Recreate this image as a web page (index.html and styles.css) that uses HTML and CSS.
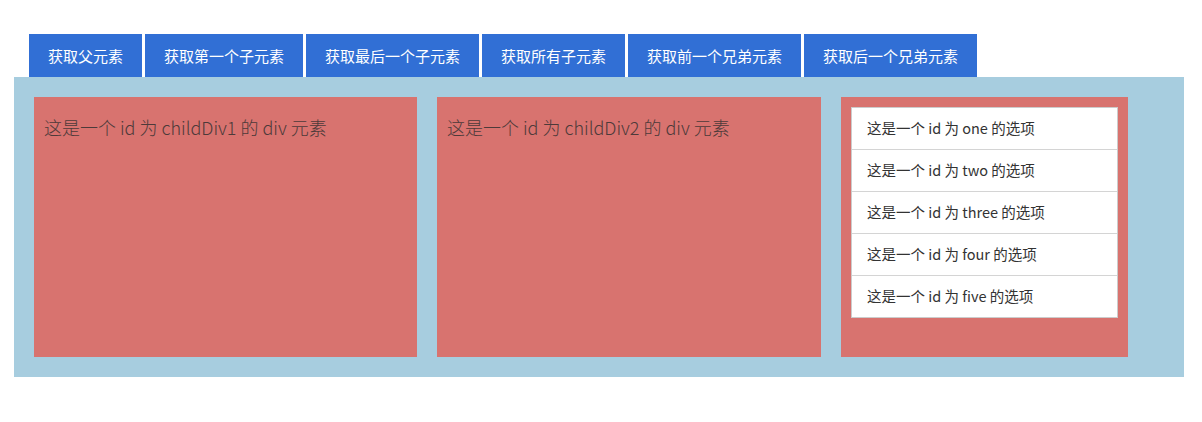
FILE: index.html
```html
<!DOCTYPE html>
<html lang="zh">
<head>
<meta charset="utf-8">
<link rel="stylesheet" href="styles.css">
</head>
<body>
<div class="page">
  <div class="toolbar">
    <button class="btn">获取父元素</button>
    <button class="btn">获取第一个子元素</button>
    <button class="btn">获取最后一个子元素</button>
    <button class="btn">获取所有子元素</button>
    <button class="btn">获取前一个兄弟元素</button>
    <button class="btn">获取后一个兄弟元素</button>
  </div>
  <div class="parent">
    <div class="child child-wide">这是一个 id 为 childDiv1 的 div 元素</div>
    <div class="child child-wide2">这是一个 id 为 childDiv2 的 div 元素</div>
    <div class="child child-list">
      <ul class="list">
        <li>这是一个 id 为 one 的选项</li>
        <li>这是一个 id 为 two 的选项</li>
        <li>这是一个 id 为 three 的选项</li>
        <li>这是一个 id 为 four 的选项</li>
        <li>这是一个 id 为 five 的选项</li>
      </ul>
    </div>
  </div>
</div>
</body>
</html>
```
FILE: styles.css
```css
* { box-sizing: border-box; }
body {
  margin: 0;
  background: #fff;
  font-family: "Noto Sans CJK SC", "Noto Sans", sans-serif;
}
.page {
  padding: 34px 0 0 14px;
}
.toolbar {
  display: flex;
  gap: 3px;
  padding-left: 15px;
}
.btn {
  height: 43px;
  padding: 0;
  border: none;
  background: #316fd5;
  color: #fff;
  font-family: "Noto Sans CJK SC", "Noto Sans", sans-serif;
  font-size: 15px;
  line-height: 43px;
  margin: 0;
}
.btn:nth-child(1) { width: 113px; }
.btn:nth-child(2) { width: 158px; }
.btn:nth-child(3) { width: 173px; }
.btn:nth-child(4) { width: 143px; }
.btn:nth-child(5) { width: 173px; }
.btn:nth-child(6) { width: 173px; }
.parent {
  width: 1170px;
  height: 300px;
  background: #a7cddf;
  padding: 20px;
  display: flex;
  gap: 20px;
}
.child {
  height: 260px;
  background: #d8736f;
  padding: 10px;
}
.child-wide, .child-wide2 {
  font-size: 18px;
  font-weight: 300;
  color: #4d3a3a;
  line-height: 40px;
}
.child-wide { width: 383px; }
.child-wide2 { width: 384px; }
.child-list { width: 287px; }
.list {
  list-style: none;
  margin: 0;
  padding: 0;
  background: #fff;
  border: 1px solid #ccc;
}
.list li {
  height: 42px;
  line-height: 40px;
  padding-left: 15px;
  font-size: 14.5px;
  color: #333;
  border-top: 1px solid #d4d4d4;
}
.list li:first-child { border-top: none; height: 41px; }
```
